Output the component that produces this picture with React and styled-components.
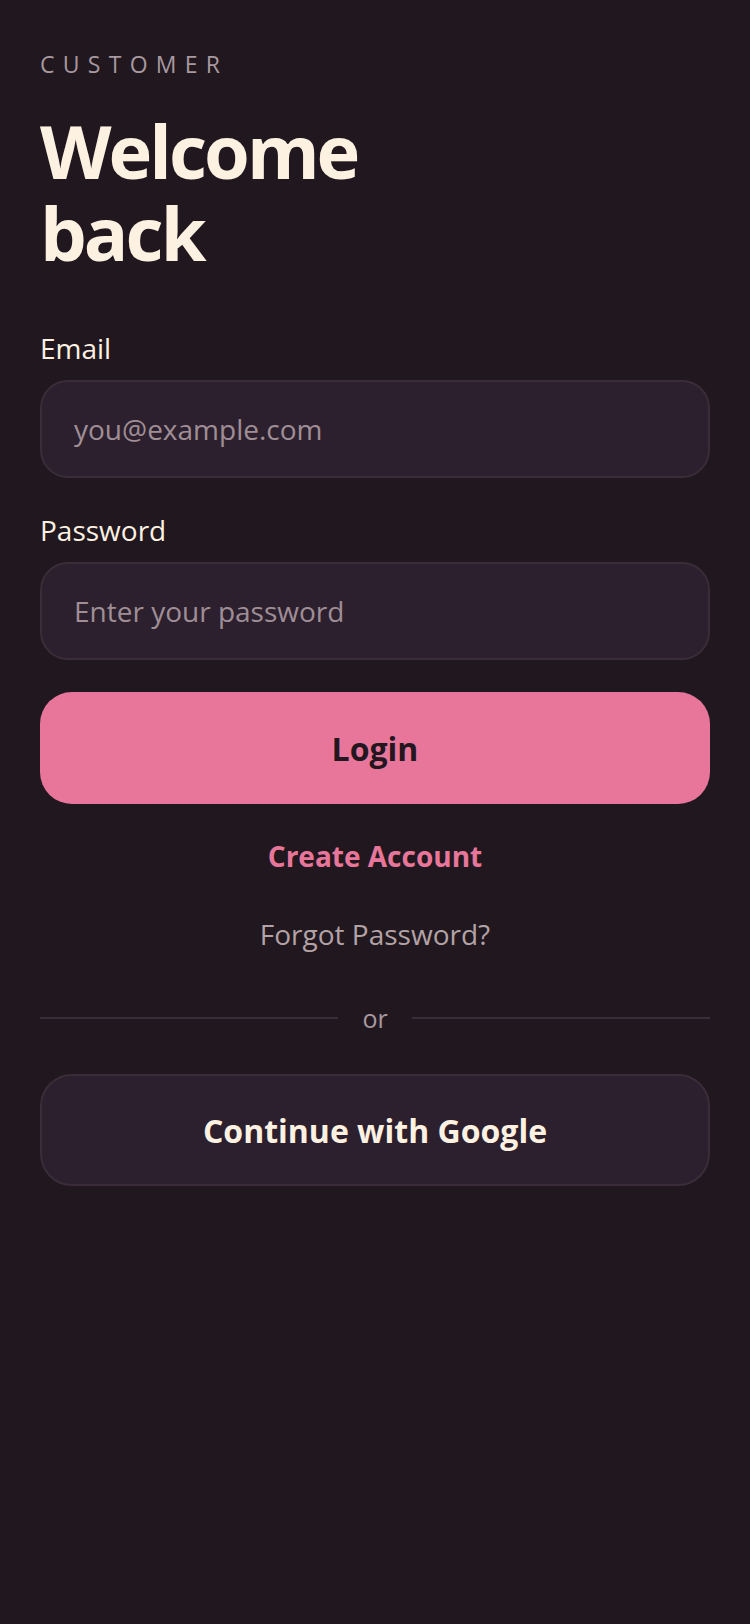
import styled, { createGlobalStyle } from "styled-components";

const GlobalStyle = createGlobalStyle`
	html, body {
		margin: 0;
		padding: 0;
		background: #21181f;
	}
	* {
		box-sizing: border-box;
	}
`;

function App() {
	return (
		<>
			<GlobalStyle />
			<Page>
				<Eyebrow>Customer</Eyebrow>
				<Title>
					Welcome
					<br />
					back
				</Title>
				<Form>
					<Field>
						<Label htmlFor="email">Email</Label>
						<Input id="email" type="email" placeholder="you@example.com" />
					</Field>
					<Field>
						<Label htmlFor="password">Password</Label>
						<Input
							id="password"
							type="password"
							placeholder="Enter your password"
						/>
					</Field>
					<PrimaryButton type="button">Login</PrimaryButton>
				</Form>
				<TextLink $accent>Create Account</TextLink>
				<TextLink>Forgot Password?</TextLink>
				<Divider>
					<span>or</span>
				</Divider>
				<SecondaryButton type="button">Continue with Google</SecondaryButton>
			</Page>
		</>
	);
}

export default App;

const Page = styled.div`
	min-height: 1624px;
	padding: 46px 40px 40px;
	display: flex;
	flex-direction: column;
	font-family: "Open Sans", "Noto Sans", sans-serif;
	color: #fdf1e2;
`;

const Eyebrow = styled.div`
	font-size: 23px;
	letter-spacing: 0.36em;
	text-transform: uppercase;
	color: #a8989f;
	line-height: 36px;
`;

const Title = styled.h1`
	margin: 28px 0 0;
	font-size: 74px;
	font-weight: 700;
	line-height: 82px;
	letter-spacing: -0.04em;
	color: #fdf1e2;
`;

const Form = styled.div`
	margin-top: 54px;
	display: flex;
	flex-direction: column;
`;

const Field = styled.div`
	display: flex;
	flex-direction: column;
	margin-bottom: 32px;
`;

const Label = styled.label`
	font-size: 28px;
	line-height: 40px;
	color: #fdf1e2;
	margin-bottom: 12px;
`;

const Input = styled.input`
	height: 98px;
	width: 100%;
	padding: 0 32px;
	border: 2px solid #3a2d39;
	border-radius: 28px;
	background: #2d202e;
	color: #fdf1e2;
	font-family: inherit;
	font-size: 28px;
	outline: none;

	&::placeholder {
		color: #9f8e95;
	}
`;

const PrimaryButton = styled.button`
	height: 112px;
	width: 100%;
	border: none;
	border-radius: 32px;
	background: #e8769a;
	color: #23161f;
	font-family: inherit;
	font-size: 32px;
	font-weight: 700;
	cursor: pointer;
`;

const TextLink = styled.a`
	align-self: center;
	margin-top: ${(p) => (p.$accent ? "32px" : "38px")};
	font-size: 28px;
	line-height: 40px;
	font-weight: ${(p) => (p.$accent ? 700 : 400)};
	color: ${(p) => (p.$accent ? "#e8769a" : "#b3a2a6")};
	cursor: pointer;
`;

const Divider = styled.div`
	margin-top: 46px;
	display: flex;
	align-items: center;
	gap: 24px;
	color: #a8989f;
	font-size: 25px;
	line-height: 36px;

	&::before,
	&::after {
		content: "";
		flex: 1;
		height: 2px;
		background: #3a2d39;
	}
`;

const SecondaryButton = styled.button`
	margin-top: 38px;
	height: 112px;
	width: 100%;
	border: 2px solid #3a2d39;
	border-radius: 32px;
	background: #2d202e;
	color: #fdf1e2;
	font-family: inherit;
	font-size: 32px;
	font-weight: 700;
	cursor: pointer;
`;
